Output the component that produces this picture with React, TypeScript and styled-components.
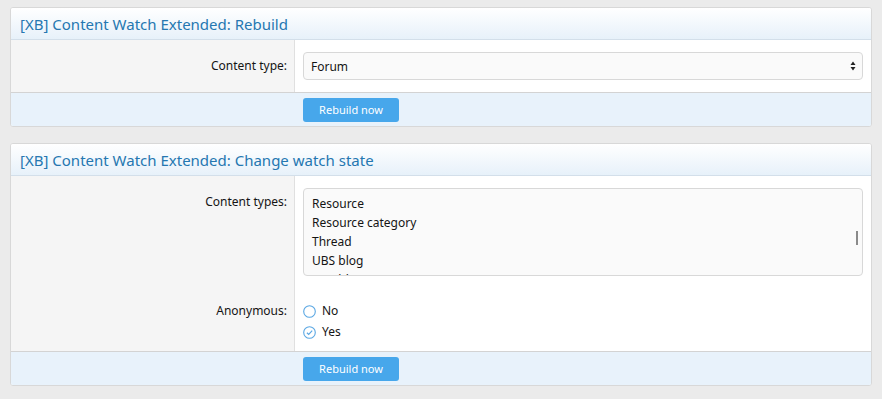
import React from "react";
import styled, { createGlobalStyle } from "styled-components";

const Global = createGlobalStyle`
  html, body { margin: 0; padding: 0; background: #ebebeb; }
  body { font-family: "Segoe UI", "Noto Sans", "Open Sans", sans-serif; color: #141414; }
`;

const Page = styled.div`
  padding: 7px 10px 0 10px;
  display: flex;
  flex-direction: column;
  gap: 16px;
`;

const Block = styled.section`
  background: #fff;
  border: 1px solid #d8d8d8;
  border-radius: 3px;
  overflow: hidden;
`;

const BlockHeader = styled.h2`
  margin: 0;
  height: 31px;
  padding: 0 9px;
  display: flex;
  align-items: center;
  font-size: 15px;
  font-weight: 400;
  color: #2577b1;
  background: linear-gradient(to bottom, #ffffff 0%, #e7f1fa 100%);
  border-bottom: 1px solid #d3dfea;
`;

const Body = styled.div`
  display: grid;
  grid-template-columns: 284px 1fr;
  border-bottom: 1px solid #d3d3d3;
`;

const Label = styled.div<{ $pt: number }>`
  background: #f5f5f5;
  border-right: 1px solid #e0e0e0;
  text-align: right;
  padding: ${(p) => p.$pt}px 7px 0 0;
  font-size: 12px;
  line-height: 16px;
`;

const Cell = styled.div<{ $pt: number; $pb: number }>`
  padding: ${(p) => p.$pt}px 8px ${(p) => p.$pb}px 8px;
`;

const SelectBox = styled.div`
  height: 26px;
  border: 1px solid #d8d8d8;
  border-radius: 4px;
  background: #fafafa;
  display: flex;
  align-items: center;
  justify-content: space-between;
  padding: 0 6px 0 7px;
  font-size: 12px;
`;

const Arrows = styled.svg`
  width: 6px;
  height: 10px;
`;

const ListBox = styled.div`
  position: relative;
  height: 88px;
  border: 1px solid #d8d8d8;
  border-radius: 4px;
  background: #fafafa;
  overflow: hidden;
  padding: 5px 8px 0 8px;
  box-sizing: border-box;
  font-size: 12px;
`;

const ListItem = styled.div`
  line-height: 19px;
  height: 19px;
`;

const ScrollThumb = styled.div`
  position: absolute;
  right: 4px;
  top: 42px;
  width: 2px;
  height: 14px;
  background: #8a8a8a;
`;

const RadioList = styled.div`
  display: flex;
  flex-direction: column;
  gap: 5px;
`;

const RadioRow = styled.label`
  display: flex;
  align-items: center;
  gap: 6px;
  font-size: 12px;
  line-height: 16px;
`;

const Footer = styled.div`
  background: #e8f2fb;
  padding: 4px 0 4px 292px;
  height: 25px;
`;

const Button = styled.button`
  width: 96px;
  height: 24px;
  border: none;
  border-radius: 3px;
  background: #47a7eb;
  color: #fff;
  font-family: inherit;
  font-size: 11px;
  padding: 0;
`;

const Radio = ({ checked }: { checked?: boolean }) => (
  <svg width="13" height="13" viewBox="0 0 13 13">
    <circle cx="6.5" cy="6.5" r="5.8" fill="#fff" stroke="#5aa7e3" strokeWidth="1.1" />
    {checked && (
      <path d="M3.9 6.7 L5.7 8.4 L9.2 4.7" fill="none" stroke="#5aa7e3" strokeWidth="1.2" />
    )}
  </svg>
);

export default function App() {
  return (
    <>
      <Global />
      <Page>
        <Block>
          <BlockHeader>[XB] Content Watch Extended: Rebuild</BlockHeader>
          <Body>
            <Label $pt={18}>Content type:</Label>
            <Cell $pt={12} $pb={12}>
              <SelectBox>
                <span>Forum</span>
                <Arrows viewBox="0 0 6 10">
                  <path d="M3 0.5 L5.5 4 L0.5 4 Z" fill="#222" />
                  <path d="M3 9.5 L5.5 6 L0.5 6 Z" fill="#222" />
                </Arrows>
              </SelectBox>
            </Cell>
          </Body>
          <Footer>
            <Button>Rebuild now</Button>
          </Footer>
        </Block>
        <Block>
          <BlockHeader>[XB] Content Watch Extended: Change watch state</BlockHeader>
          <Body>
            <Label $pt={18}>Content types:</Label>
            <Cell $pt={12} $pb={12}>
              <ListBox>
                <ListItem>Resource</ListItem>
                <ListItem>Resource category</ListItem>
                <ListItem>Thread</ListItem>
                <ListItem>UBS blog</ListItem>
                <ListItem>UBS blog post</ListItem>
                <ScrollThumb />
              </ListBox>
            </Cell>
            <Label $pt={15}>Anonymous:</Label>
            <Cell $pt={15} $pb={11}>
              <RadioList>
                <RadioRow>
                  <Radio /> No
                </RadioRow>
                <RadioRow>
                  <Radio checked /> Yes
                </RadioRow>
              </RadioList>
            </Cell>
          </Body>
          <Footer>
            <Button>Rebuild now</Button>
          </Footer>
        </Block>
      </Page>
    </>
  );
}
